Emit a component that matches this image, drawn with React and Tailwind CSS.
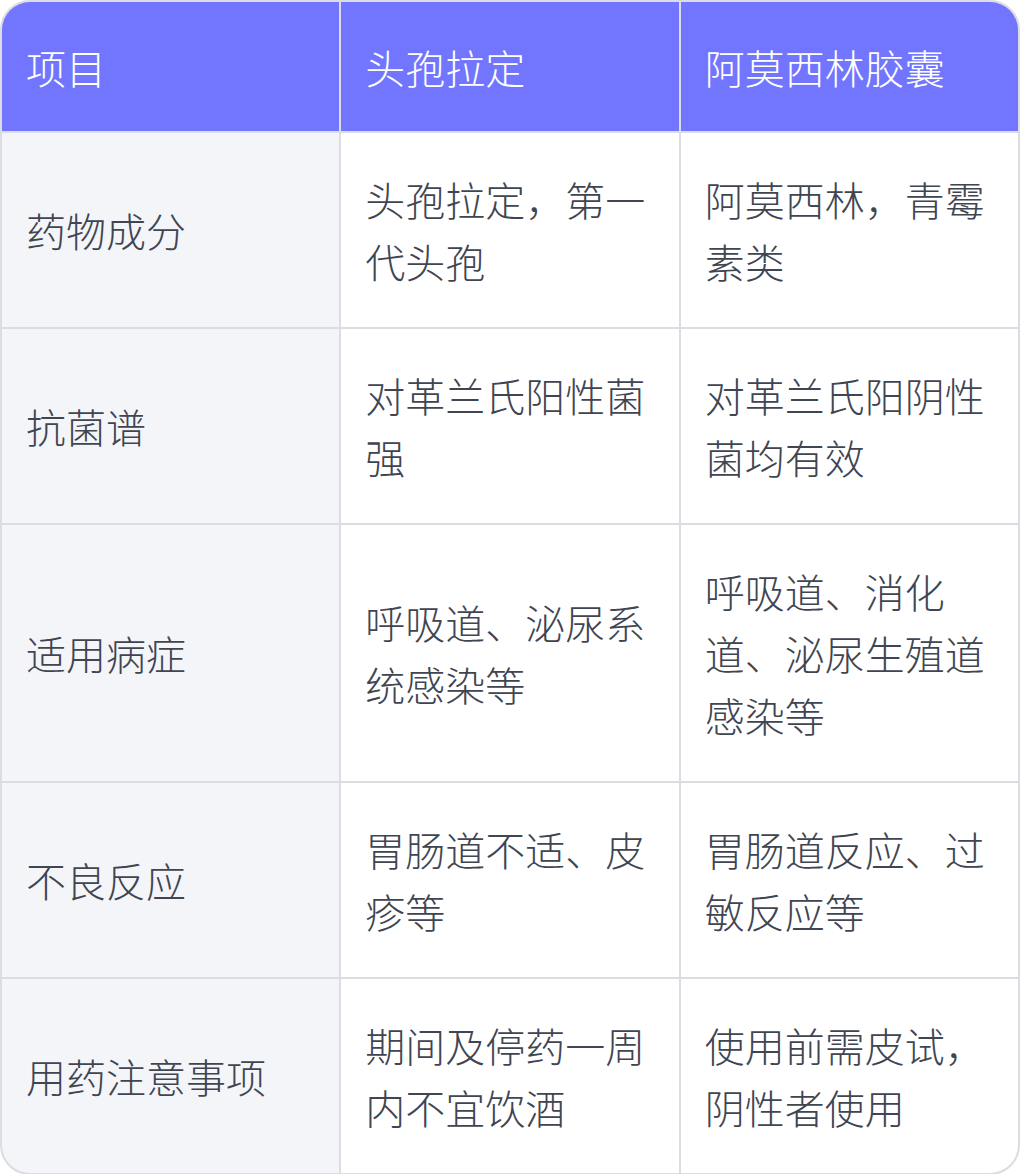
import { Fragment } from "react";

const rows = [
  ["药物成分", "头孢拉定，第一代头孢", "阿莫西林，青霉素类"],
  ["抗菌谱", "对革兰氏阳性菌强", "对革兰氏阳阴性菌均有效"],
  ["适用病症", "呼吸道、泌尿系统感染等", "呼吸道、消化道、泌尿生殖道感染等"],
  ["不良反应", "胃肠道不适、皮疹等", "胃肠道反应、过敏反应等"],
  ["用药注意事项", "期间及停药一周内不宜饮酒", "使用前需皮试，阴性者使用"],
];

export default function App() {
  return (
    <div
      className="w-[1020px] h-[1174px] bg-white font-light"
      style={{ fontFamily: '"Noto Sans CJK SC", "Noto Sans", sans-serif' }}
    >
      <div className="rounded-[30px] border-2 border-[#dcdde3] overflow-hidden bg-[#dcdde3]">
        <div className="grid grid-cols-3 gap-[2px] text-[40px] leading-[62px]">
          {/* 表头 */}
          {["项目", "头孢拉定", "阿莫西林胶囊"].map((h) => (
            <div
              key={h}
              className="bg-[#7276fe] text-white px-[24px] pt-[34px] pb-[33px] flex items-center"
            >
              {h}
            </div>
          ))}

          {rows.map((r) => (
            <Fragment key={r[0]}>
              <div className="bg-[#f4f5f9] text-[#404552] px-[24px] py-[35px] flex items-center">
                {r[0]}
              </div>
              <div className="bg-white text-[#404552] px-[24px] py-[35px] flex items-center">
                {r[1]}
              </div>
              <div className="bg-white text-[#404552] px-[24px] py-[35px] flex items-center">
                {r[2]}
              </div>
            </Fragment>
          ))}
        </div>
      </div>
    </div>
  );
}
